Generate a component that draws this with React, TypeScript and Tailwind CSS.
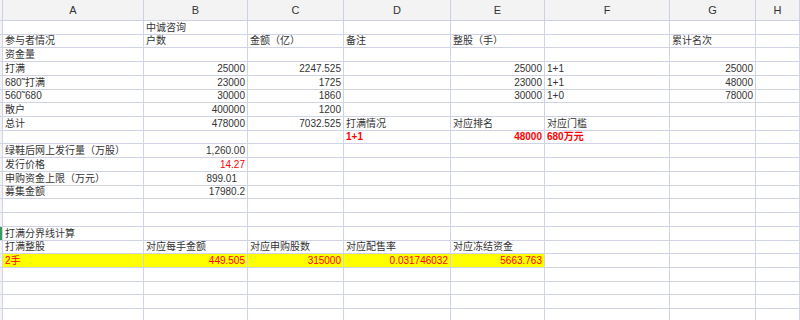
import React from "react";

type Cell = { t: string; r?: boolean; red?: boolean; bold?: boolean; pr?: string };

const cols = ["A", "B", "C", "D", "E", "F", "G", "H"];

// each row: cells for columns A..H (missing = empty)
const rows: { cells: (Cell | null)[]; yellow?: boolean; mark?: boolean }[] = [
  { cells: [null, { t: "中诚咨询" }] },
  {
    cells: [
      { t: "参与者情况" },
      { t: "户数" },
      { t: "金额（亿）" },
      { t: "备注" },
      { t: "整股（手）" },
      null,
      { t: "累计名次" },
    ],
  },
  { cells: [{ t: "资金量" }] },
  {
    cells: [
      { t: "打满" },
      { t: "25000", r: true },
      { t: "2247.525", r: true },
      null,
      { t: "25000", r: true },
      { t: "1+1" },
      { t: "25000", r: true },
    ],
  },
  {
    cells: [
      { t: "680˜打满" },
      { t: "23000", r: true },
      { t: "1725", r: true },
      null,
      { t: "23000", r: true },
      { t: "1+1" },
      { t: "48000", r: true },
    ],
  },
  {
    cells: [
      { t: "560˜680" },
      { t: "30000", r: true },
      { t: "1860", r: true },
      null,
      { t: "30000", r: true },
      { t: "1+0" },
      { t: "78000", r: true },
    ],
  },
  { cells: [{ t: "散户" }, { t: "400000", r: true }, { t: "1200", r: true }] },
  {
    cells: [
      { t: "总计" },
      { t: "478000", r: true },
      { t: "7032.525", r: true },
      { t: "打满情况" },
      { t: "对应排名" },
      { t: "对应门槛" },
    ],
  },
  {
    cells: [
      null,
      null,
      null,
      { t: "1+1", red: true, bold: true },
      { t: "48000", r: true, red: true, bold: true },
      { t: "680万元", red: true, bold: true },
    ],
  },
  { cells: [{ t: "绿鞋后网上发行量（万股）" }, { t: "1,260.00", r: true }] },
  { cells: [{ t: "发行价格" }, { t: "14.27", r: true, red: true }] },
  { cells: [{ t: "申购资金上限（万元）" }, { t: "899.01", r: true, pr: "pr-[10px]" }] },
  { cells: [{ t: "募集金额" }, { t: "17980.2", r: true }] },
  { cells: [] },
  { cells: [] },
  { cells: [{ t: "打满分界线计算" }], mark: true },
  {
    cells: [
      { t: "打满整股" },
      { t: "对应每手金额" },
      { t: "对应申购股数" },
      { t: "对应配售率" },
      { t: "对应冻结资金" },
    ],
  },
  {
    yellow: true,
    cells: [
      { t: "2手", red: true },
      { t: "449.505", r: true, red: true },
      { t: "315000", r: true, red: true },
      { t: "0.031746032", r: true, red: true },
      { t: "5663.763", r: true, red: true },
    ],
  },
  { cells: [] },
  { cells: [] },
  { cells: [] },
  { cells: [] },
];

export default function App() {
  return (
    <div className="w-[800px] h-[320px] overflow-hidden bg-white font-['Liberation_Sans','Noto_Sans_CJK_SC',sans-serif] text-[#333]">
      <div className="grid grid-cols-[3px_141px_104px_96px_107px_94px_125px_86px_1fr]">
        {/* column header */}
        <div className="h-[21px] bg-[#f3f3f3] border-r border-b border-[#cdd0e0]" />
        {cols.map((c) => (
          <div
            key={c}
            className="h-[21px] bg-[#f3f3f3] border-r border-b border-[#cdd0e0] flex items-center justify-center text-[11px] text-[#333]"
          >
            {c}
          </div>
        ))}

        {rows.map((row, ri) => (
          <React.Fragment key={ri}>
            <div
              className={`h-[13.73px] border-r border-b border-[#d0d3e3] ${
                row.mark ? "bg-[#3a9a5b]" : "bg-[#f3f3f3]"
              }`}
            />
            {cols.map((c, ci) => {
              const cell = row.cells[ci];
              const yellow = row.yellow && ci < 5;
              return (
                <div
                  key={c}
                  className={`h-[13.73px] border-r border-b border-[#d0d3e3] flex items-end pb-[1px] overflow-visible whitespace-nowrap text-[10px] leading-none ${
                    yellow ? "bg-[#ffff00]" : ""
                  } ${cell?.r ? "justify-end" : "justify-start pl-[2px]"} ${
                    cell?.r ? cell.pr ?? "pr-[2px]" : ""
                  } ${cell?.red ? "text-[#ff0000]" : ""} ${cell?.bold ? "font-bold" : ""}`}
                >
                  {cell?.t}
                </div>
              );
            })}
          </React.Fragment>
        ))}
      </div>
    </div>
  );
}
